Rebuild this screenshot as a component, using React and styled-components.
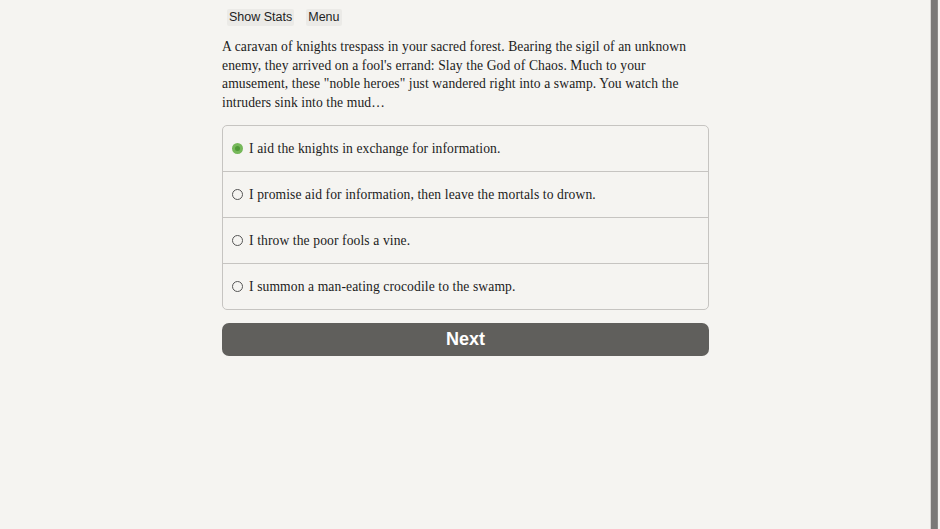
import React, { useState } from 'react';
import styled, { createGlobalStyle } from 'styled-components';

const GlobalStyle = createGlobalStyle`
  html, body {
    margin: 0;
    padding: 0;
    background: #f5f4f1;
  }
`;

const choices = [
  'I aid the knights in exchange for information.',
  'I promise aid for information, then leave the mortals to drown.',
  'I throw the poor fools a vine.',
  'I summon a man-eating crocodile to the swamp.',
];

function App() {
  const [picked, setPicked] = useState(0);

  return (
    <>
      <GlobalStyle />
      <Page>
        <Main>
          <Column>
            <Toolbar>
              <TopButton>Show Stats</TopButton>
              <TopButton>Menu</TopButton>
            </Toolbar>
            <Story>
              A caravan of knights trespass in your sacred forest. Bearing the sigil of an unknown
              enemy, they arrived on a fool's errand: Slay the God of Chaos. Much to your
              amusement, these "noble heroes" just wandered right into a swamp. You watch the
              intruders sink into the mud…
            </Story>
            <ChoiceList>
              {choices.map((text, i) => (
                <Choice key={i} onClick={() => setPicked(i)}>
                  <Radio $on={picked === i} />
                  {text}
                </Choice>
              ))}
            </ChoiceList>
            <NextButton>Next</NextButton>
          </Column>
        </Main>
        <Scrollbar />
      </Page>
    </>
  );
}

const Page = styled.div`
  display: flex;
  min-height: 529px;
`;

const Main = styled.div`
  flex: 0 0 930px;
  display: flex;
  justify-content: center;
`;

const Scrollbar = styled.div`
  flex: 0 0 7px;
  background: #7a7977;
  border-left: 1px solid #d6d5d2;
  box-shadow: inset -1px 0 0 #8c8b89;
`;

const Column = styled.div`
  width: 487px;
  padding-left: 1px;
`;

const Toolbar = styled.div`
  display: flex;
  gap: 12px;
  padding: 9px 0 0 5px;
`;

const TopButton = styled.button`
  font-family: 'Liberation Sans', Arial, sans-serif;
  font-size: 12.5px;
  color: #1e1e1e;
  background: #ebeae7;
  border: none;
  border-radius: 2px;
  height: 17px;
  line-height: 17px;
  padding: 0 2px;
  cursor: pointer;
`;

const Story = styled.p`
  font-family: 'Liberation Serif', 'Times New Roman', serif;
  font-size: 13.6px;
  line-height: 18.5px;
  color: #1c1c1c;
  margin: 12px 0 13px;
  letter-spacing: 0.1px;
`;

const ChoiceList = styled.div`
  border: 1px solid #c6c4c1;
  border-radius: 5px;
  overflow: hidden;
`;

const Choice = styled.label`
  display: flex;
  align-items: center;
  gap: 6px;
  height: 45px;
  padding: 0 9px;
  font-family: 'Liberation Serif', 'Times New Roman', serif;
  font-size: 13.6px;
  letter-spacing: 0.1px;
  color: #1c1c1c;
  cursor: pointer;
  & + & {
    border-top: 1px solid #c6c4c1;
  }
`;

const Radio = styled.span`
  box-sizing: border-box;
  width: 11px;
  height: 11px;
  border-radius: 50%;
  flex: none;
  border: ${(p) => (p.$on ? '3px solid #76b85a' : '1px solid #555')};
  background: ${(p) => (p.$on ? '#4f9a37' : 'transparent')};
`;

const NextButton = styled.button`
  display: block;
  width: 100%;
  height: 33px;
  margin-top: 13px;
  border: none;
  border-radius: 7px;
  background: #605f5c;
  color: #fff;
  font-family: 'Liberation Sans', Arial, sans-serif;
  font-weight: bold;
  font-size: 18px;
  cursor: pointer;
`;

export default App;
